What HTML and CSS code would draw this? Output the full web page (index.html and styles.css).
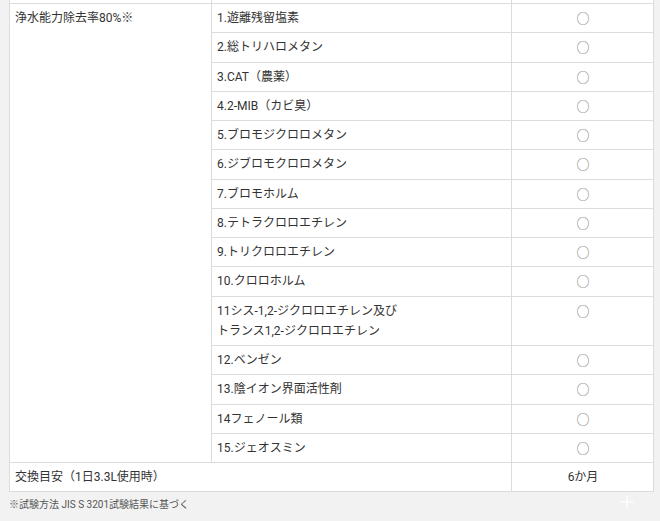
FILE: index.html
```html
<!DOCTYPE html>
<html lang="ja">
<head>
<meta charset="utf-8">
<link rel="stylesheet" href="styles.css">
</head>
<body>
<div class="wrap">
  <table class="spec">
    <colgroup>
      <col class="c1"><col class="c2"><col class="c3">
    </colgroup>
    <tr class="spacer"><td></td><td></td><td></td></tr>
    <tr><td class="head" rowspan="15">浄水能力除去率80%※</td><td>1.遊離残留塩素</td><td class="mark">○</td></tr>
    <tr><td>2.総トリハロメタン</td><td class="mark">○</td></tr>
    <tr><td>3.CAT（農薬）</td><td class="mark">○</td></tr>
    <tr><td>4.2-MIB（カビ臭）</td><td class="mark">○</td></tr>
    <tr><td>5.ブロモジクロロメタン</td><td class="mark">○</td></tr>
    <tr><td>6.ジブロモクロロメタン</td><td class="mark">○</td></tr>
    <tr><td>7.ブロモホルム</td><td class="mark">○</td></tr>
    <tr><td>8.テトラクロロエチレン</td><td class="mark">○</td></tr>
    <tr><td>9.トリクロロエチレン</td><td class="mark">○</td></tr>
    <tr><td>10.クロロホルム</td><td class="mark">○</td></tr>
    <tr><td>11シス-1,2-ジクロロエチレン及び<br>トランス1,2-ジクロロエチレン</td><td class="mark">○</td></tr>
    <tr><td>12.ベンゼン</td><td class="mark">○</td></tr>
    <tr><td>13.陰イオン界面活性剤</td><td class="mark">○</td></tr>
    <tr><td>14フェノール類</td><td class="mark">○</td></tr>
    <tr><td>15.ジェオスミン</td><td class="mark">○</td></tr>
    <tr><td colspan="2">交換目安（1日3.3L使用時）</td><td class="val">6か月</td></tr>
  </table>
  <p class="note">※試験方法 JIS S 3201試験結果に基づく</p>
</div>
<button class="fab" aria-label="追加">
  <svg width="14" height="14" viewBox="0 0 14 14"><path d="M7 0.5V13.5M0.5 7H13.5" stroke="#fff" stroke-width="1.6" fill="none"/></svg>
</button>
</body>
</html>
```
FILE: styles.css
```css
html, body {
  margin: 0;
  padding: 0;
  background: #f2f2f2;
  height: 521px;
  overflow: hidden;
}
body {
  font-family: "Roboto", "Noto Sans CJK JP", sans-serif;
  font-size: 12px;
  color: #333;
}
.wrap {
  padding-left: 9px;
  width: 644px;
}
.spec {
  border-collapse: collapse;
  table-layout: fixed;
  width: 644px;
  background: #fff;
}
.c1 { width: 202px; }
.c2 { width: 300px; }
.c3 { width: 142px; }
.spec td {
  border: 1px solid #dcdcdc;
  padding: 4px 4px 4px 5px;
  line-height: 20.25px;
  vertical-align: top;
  text-align: left;
}
.spec tr.spacer td {
  border-top: none;
  height: 3px;
  padding: 0;
  line-height: 0;
}
.spec td.mark {
  text-align: center;
  color: #777;
  font-family: "Noto Sans CJK JP", sans-serif;
  font-size: 13px;
}
.spec td.val {
  text-align: center;
  vertical-align: middle;
}
.note {
  margin: 6px 0 0 0;
  font-size: 10px;
  line-height: 14px;
  color: #555;
}
.fab {
  position: absolute;
  left: 620px;
  top: 494px;
  width: 15px;
  height: 15px;
  padding: 0;
  border: none;
  background: transparent;
  opacity: 0.85;
}
.fab svg { display: block; }
```
